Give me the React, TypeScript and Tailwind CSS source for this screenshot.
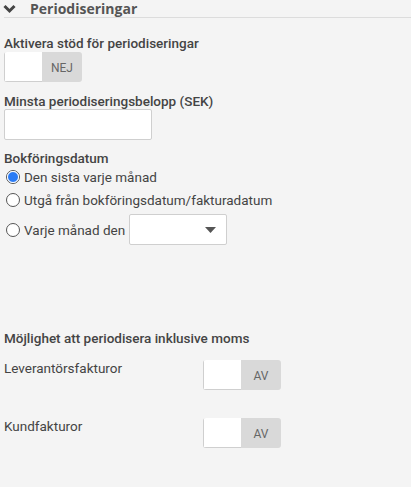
import React from "react";

function Toggle({ label }: { label: string }) {
  return (
    <div className="flex h-[30px] w-[78px] rounded-[3px] bg-[#d9d9d9] overflow-hidden">
      <div className="w-[38px] h-full bg-white border-l border-b border-[#cfcfcf]"></div>
      <div className="flex-1 flex items-center justify-center text-[12px] text-[#666] pt-[2px]">{label}</div>
    </div>
  );
}

function Radio({ checked }: { checked?: boolean }) {
  return (
    <span className="inline-flex w-[14px] h-[14px] rounded-full border border-[#555] items-center justify-center bg-white shrink-0">
      {checked && <span className="w-[10px] h-[10px] rounded-full bg-[#2a7bf5] border-[1.5px] border-white box-content"></span>}
    </span>
  );
}

export default function App() {
  return (
    <div className="w-[411px] h-[487px] bg-[#f4f4f4] text-[#444]" style={{ fontFamily: "Roboto, 'Noto Sans', sans-serif" }}>
      <div className="flex items-center h-[18px] ml-[4px] border-b border-[#dcdcdc]">
        <svg width="13" height="10" viewBox="0 0 13 10" className="-ml-[1px]">
          <path d="M1.5 2 L6.5 7 L11.5 2" stroke="#444" strokeWidth="3" fill="none" />
        </svg>
        <span className="ml-[14px] text-[14px] leading-[17px] font-bold text-[#555]" style={{ fontFamily: "'Open Sans', sans-serif" }}>Periodiseringar</span>
      </div>

      <div className="px-[4px]">
        <div className="mt-[17px] text-[13.5px] font-medium leading-[16px] text-[#444]">Aktivera stöd för periodiseringar</div>
        <div className="mt-[1px]">
          <Toggle label="NEJ" />
        </div>

        <div className="mt-[11px] text-[13.5px] font-medium leading-[16px]">Minsta periodiseringsbelopp (SEK)</div>
        <div className="mt-0 w-[148px] h-[31px] bg-white border border-[#cfcfcf] rounded-[2px]"></div>

        <div className="mt-[10px] text-[13.5px] font-medium leading-[16px]">Bokföringsdatum</div>
        <div className="mt-[1px] flex items-center gap-[4px] ml-[2px] text-[13.5px] text-[#444] leading-[20px]">
          <Radio checked />
          <span>Den sista varje månad</span>
        </div>
        <div className="mt-[3px] flex items-center gap-[4px] ml-[2px] text-[13.5px] text-[#444] leading-[20px]">
          <Radio />
          <span>Utgå från bokföringsdatum/fakturadatum</span>
        </div>
        <div className="mt-[4px] flex items-center ml-[2px] text-[13.5px] text-[#444] leading-[20px]">
          <Radio />
          <span className="ml-[4px]">Varje månad den</span>
          <div className="ml-[4px] w-[98px] h-[31px] bg-white border border-[#cfcfcf] rounded-[2px] flex items-center justify-end pr-[10px]">
            <svg width="11" height="6" viewBox="0 0 11 6"><path d="M0 0 L11 0 L5.5 6 Z" fill="#555" /></svg>
          </div>
        </div>

        <div className="mt-[85px] text-[13.5px] font-medium leading-[16px]">Möjlighet att periodisera inklusive moms</div>

        <div className="mt-[14px] flex items-start">
          <div className="w-[199px] text-[13.5px] text-[#444] leading-[16px]">Leverantörsfakturor</div>
          <Toggle label="AV" />
        </div>
        <div className="mt-[28px] flex items-start">
          <div className="w-[199px] text-[13.5px] text-[#444] leading-[16px]">Kundfakturor</div>
          <Toggle label="AV" />
        </div>
      </div>
    </div>
  );
}
